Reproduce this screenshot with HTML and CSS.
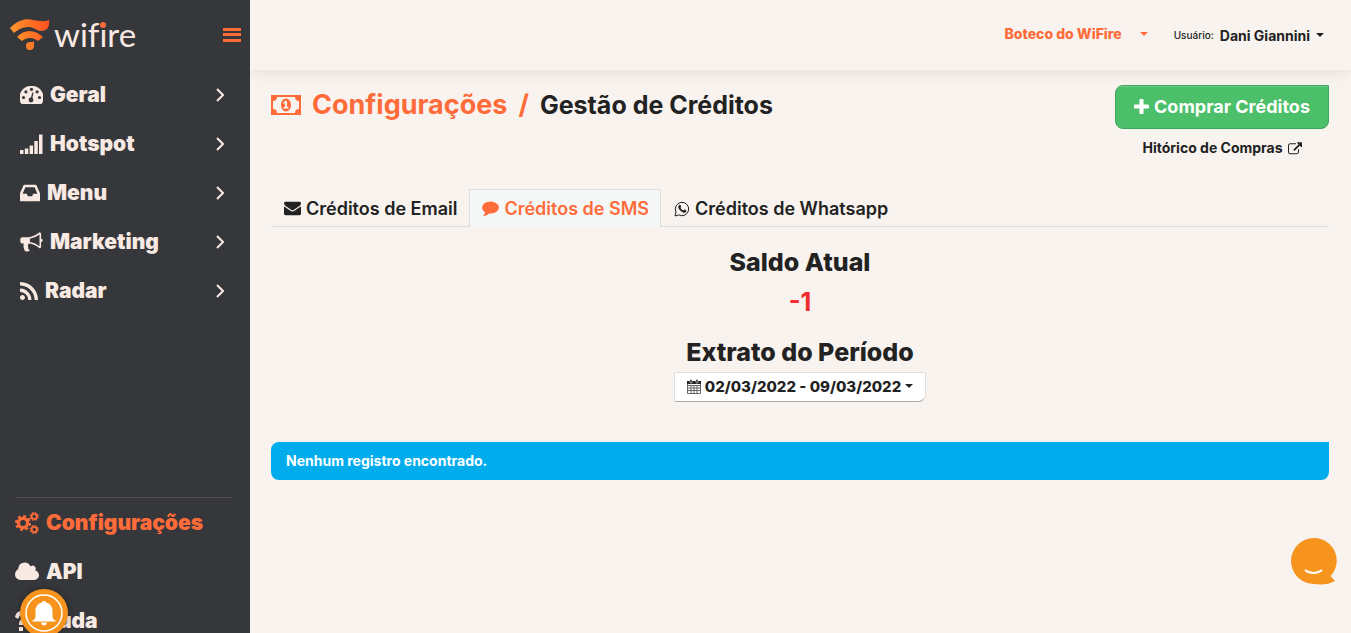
FILE: index.html
```html
<!DOCTYPE html>
<html lang="pt-BR">
<head>
  <meta charset="UTF-8" />
  <meta name="viewport" content="width=device-width, initial-scale=1.0" />
  <title>WiFire - Gestão de Créditos</title>
  <link rel="stylesheet" href="styles.css">
</head>
<body>
  <aside class="sidebar">
    <div class="brand">
      <a href="#" aria-label="wifire">
        <svg class="logo" viewBox="0 0 130 40">
          <defs>
            <linearGradient id="fire" gradientUnits="userSpaceOnUse" x1="0" y1="20" x2="40" y2="10">
              <stop offset="0" stop-color="#ff9b2d" />
              <stop offset="1" stop-color="#ff4f1f" />
            </linearGradient>
          </defs>
          <path fill="url(#fire)" d="M0 13C8 5 16 3 23 5c6 1 11 2 16 0 1 7-2 11-8 11-4 0-7-4-12-4-6 0-10 2-15 6z" />
          <path fill="url(#fire)" d="M7 22c7-8 18-8 26 0l-5 4c-5-4-11-4-16 0z" />
          <path fill="url(#fire)" d="M24 26v5a4 4 0 1 1-4-4c2 0 3 0 4-1z" />
          <text class="logo-text" x="44" y="32">wifire</text>
          <circle class="logo-dot" cx="93" cy="10" r="3" />
        </svg>
      </a>
      <button class="toggle" aria-label="Alternar menu">
        <svg viewBox="0 0 18 16"><path d="M0 1h18v3H0zM0 6h18v3H0zM0 12h18v3H0z" /></svg>
      </button>
    </div>

    <nav class="nav nav-main">
      <a href="#">
        <svg class="icon w23" viewBox="0 0 23 20"><path fill-rule="evenodd" d="M11.500 1A11.500 11.500 0 0 0 1.500 19h20A11.500 11.500 0 0 0 11.500 1z" /><g class="hole"><circle cx="3.500" cy="12.500" r="1.600" /><circle cx="5.900" cy="6.800" r="1.600" /><circle cx="11.500" cy="4.300" r="1.600" /><circle cx="17.100" cy="6.800" r="1.600" /><circle cx="19.500" cy="12.500" r="1.600" /><circle cx="11" cy="15" r="2.400" /><path d="M10.500 14l1.800-6.500 1.200.3L12 15z" /></g></svg>
        <span>Geral</span>
        <svg class="chevron" viewBox="0 0 8 14"><path d="M1 1l6 6-6 6" /></svg>
      </a>
      <a href="#">
        <svg class="icon w23" viewBox="0 0 23 20"><path d="M0 16h3.500v4H0zM4.800 14.500h3.500V20H4.800zM9.600 11.500h3.500V20H9.600zM14.300 7h3.500v13h-3.500zM19 .5h3.500V20H19z" /></svg>
        <span>Hotspot</span>
        <svg class="chevron" viewBox="0 0 8 14"><path d="M1 1l6 6-6 6" /></svg>
      </a>
      <a href="#">
        <svg class="icon w20" viewBox="128 128 1536 1536"><path d="M1151 960h316q-1-3-2.500-8t-2.500-8l-212-496h-708l-212 496q-1 2-2.500 8t-2.500 8h316l95 192h320zm513 30v482q0 26-19 45t-45 19h-1408q-26 0-45-19t-19-45v-482q0-62 25-123l238-552q10-25 36.500-42t52.500-17h832q26 0 52.500 17t36.500 42l238 552q25 61 25 123z" /></svg>
        <span>Menu</span>
        <svg class="chevron" viewBox="0 0 8 14"><path d="M1 1l6 6-6 6" /></svg>
      </a>
      <a href="#">
        <svg class="icon w23" viewBox="0 100 1792 1600"><path d="M1664 640q53 0 90.500 37.500t37.500 90.500-37.500 90.500-90.500 37.500v384q0 52-38 90t-90 38q-417-347-812-380-58 19-91 66t-31 100.500 40 92.500q-20 33-23 65.500t6 58 33.500 55 48 50 61.500 50.500q-29 58-111.500 83t-168.500 11.500-132-55.500q-7-23-29.500-87.500t-32-94.500-23-89-15-101 3.500-98.500 22-110.500h-122q-66 0-113-47t-47-113v-192q0-66 47-113t113-47h480q435 0 896-384 52 0 90 38t38 90v384zm-128 604v-954q-394 302-768 343v270q377 42 768 341z" /></svg>
        <span>Marketing</span>
        <svg class="chevron" viewBox="0 0 8 14"><path d="M1 1l6 6-6 6" /></svg>
      </a>
      <a href="#">
        <svg class="icon w18" viewBox="192 128 1408 1408"><path d="M576 1344q0 80-56 136t-136 56-136-56-56-136 56-136 136-56 136 56 56 136zm512 123q2 28-17 48-18 21-47 21h-135q-25 0-43-16.500t-20-41.500q-22-229-184.500-391.500t-391.500-184.500q-25-2-41.500-20t-16.500-43v-135q0-29 21-47 17-17 43-17h5q160 13 306 80.500t259 181.500q114 113 181.500 259t80.500 306zm512 2q2 27-18 47-18 20-46 20h-143q-26 0-44.500-17.500t-19.500-42.500q-12-215-101-408.500t-231.500-336-336-231.500-408.500-102q-25-1-42.500-19.500t-17.500-43.500v-143q0-28 20-46 18-18 44-18h3q262 13 501.500 120t425.500 294q187 186 294 425.500t120 501.500z" /></svg>
        <span>Radar</span>
        <svg class="chevron" viewBox="0 0 8 14"><path d="M1 1l6 6-6 6" /></svg>
      </a>
    </nav>

    <nav class="nav nav-bottom">
      <a href="#" class="active">
        <svg class="icon gears" viewBox="0 0 24 22">
          <g class="gear"><circle cx="8" cy="11" r="4.600" stroke-width="3.200" /><circle cx="8" cy="11" r="6.900" stroke-width="2.200" stroke-dasharray="2.900 2.519" /><circle cx="19.200" cy="4.500" r="2.600" stroke-width="1.800" /><circle cx="19.200" cy="4.500" r="3.900" stroke-width="1.300" stroke-dasharray="1.700 1.363" /><circle cx="19.200" cy="17.500" r="2.600" stroke-width="1.800" /><circle cx="19.200" cy="17.500" r="3.900" stroke-width="1.300" stroke-dasharray="1.700 1.363" /></g>
        </svg>
        <span>Configurações</span>
      </a>
      <a href="#">
        <svg class="icon w24" viewBox="64 256 1920 1280"><path d="M1984 1152q0 159-112.500 271.500t-271.500 112.500h-1088q-185 0-316.500-131.500t-131.500-316.500q0-132 71-241.500t187-163.500q-2-28-2-43 0-212 150-362t362-150q158 0 286.500 88t187.500 230q70-62 166-62 106 0 181 75t75 181q0 75-41 138 129 30 213 134.500t84 239.500z" /></svg>
        <span>API</span>
      </a>
      <a href="#">
        <svg class="icon w13" viewBox="0 0 13 20"><path d="M0 6C1 2 3 0 7 0c6 0 8 6 4 10-2 1-3 2-3 4H4c0-4 1-5 3-6 2-2 1-4-1-4-1 0-2 2-3 4zM4 16h4v4H4z" /></svg>
        <span>Ajuda</span>
      </a>
    </nav>
  </aside>

  <div class="page">
    <header class="topbar">
      <button class="company">Boteco do WiFire <i class="caret"></i></button>
      <button class="user"><small>Usuário:</small> Dani Giannini <i class="caret"></i></button>
    </header>

    <main>
      <div class="heading">
        <h1>
          <svg class="money" viewBox="0 0 30 20"><path fill-rule="evenodd" d="M0 0h30v20H0zM6 2a4 4 0 0 1-4 4v8a4 4 0 0 1 4 4h18a4 4 0 0 1 4-4V6a4 4 0 0 1-4-4z" /><path fill-rule="evenodd" d="M15 3.500c3 0 5 3 5 6.500s-2 6.500-5 6.500-5-3-5-6.500 2-6.500 5-6.500zM14 6l-2 2 1 1 1-1v4h-1.500v1.500h5V12H16V6z" /></svg>
          <span class="section">Configurações</span>
          <span class="section">/</span>
          <span class="current">Gestão de Créditos</span>
        </h1>
        <div class="buy">
          <button class="btn-buy">
            <svg viewBox="192 128 1408 1408"><path d="M1600 736v192q0 40-28 68t-68 28h-416v416q0 40-28 68t-68 28h-192q-40 0-68-28t-28-68v-416h-416q-40 0-68-28t-28-68v-192q0-40 28-68t68-28h416v-416q0-40 28-68t68-28h192q40 0 68 28t28 68v416h416q40 0 68 28t28 68z" /></svg>
            Comprar Créditos
          </button>
          <a href="#" class="history">Hitórico de Compras
            <svg viewBox="0 0 1792 1600"><path d="M1408 928v320q0 119-84.500 203.500t-203.500 84.500h-832q-119 0-203.500-84.500t-84.500-203.500v-832q0-119 84.500-203.500t203.500-84.500h704q14 0 23 9t9 23v64q0 14-9 23t-23 9h-704q-66 0-113 47t-47 113v832q0 66 47 113t113 47h832q66 0 113-47t47-113v-320q0-14 9-23t23-9h64q14 0 23 9t9 23zm384-864v512q0 26-19 45t-45 19-45-19l-176-176-652 652q-10 10-23 10t-23-10l-114-114q-10-10-10-23t10-23l652-652-176-176q-19-19-19-45t19-45 45-19h512q26 0 45 19t19 45z" /></svg>
          </a>
        </div>
      </div>

      <nav class="tabs">
        <a href="#">
          <svg viewBox="0 192 1792 1536"><path d="M1792 710v794q0 66-47 113t-113 47h-1472q-66 0-113-47t-47-113v-794q44 49 101 87 362 246 497 345 57 42 92.500 65.500t94.500 48 110 24.500h2q51 0 110-24.500t94.500-48 92.500-65.500q170-123 498-345 57-39 100-87zm0-294q0 79-49 151t-122 123q-376 261-468 325-10 7-42.500 31t-54 38.500-52 32.500-57.500 27-50 9h-2q-23 0-50-9t-57.500-27-52-32.500-54-38.500-42.500-31q-91-64-262-182.500t-205-142.500q-62-42-117-115.500t-55-136.500q0-78 41.500-130t118.500-52h1472q65 0 112.500 47t47.500 113z" /></svg>
          Créditos de Email
        </a>
        <a href="#" class="active">
          <svg viewBox="0 192 1792 1600"><path d="M1792 896q0 174-120 321.500t-326 233-450 85.500q-70 0-145-8-198 175-460 242-49 14-114 22-17 2-30.500-9t-17.500-29v-1q-3-4-.5-12t2-10 4.500-9.500l6-9 7-8.500 8-9q7-8 31-34.500t34.500-38 31-39.500 32.500-51 27-59 26-76q-157-89-247.500-220t-90.500-281q0-130 71-248.500t191-204.500 286-136.500 348-50.500q244 0 450 85.500t326 233 120 321.500z" /></svg>
          Créditos de SMS
        </a>
        <a href="#">
          <svg class="whats" viewBox="0 0 16 16"><path class="line" d="M1 15l1-4a6.700 6.700 0 1 1 2.800 2.900z" /><path d="M5.300 4c.8-.5 1.200-.2 1.500.7.500 1 .3 1.300-.3 2 .8 1.400 1.600 2.100 3 2.700.7-1 .9-1.100 1.400-.8l1.400.8c.4 1.500-1.300 2.500-2.500 2.300C7 11 4.500 8 4.200 6.300c0-1 .4-1.800 1.100-2.300z" /></svg>
          Créditos de Whatsapp
        </a>
      </nav>

      <section class="balance">
        <h2>Saldo Atual</h2>
        <p class="negative">-1</p>
        <h2>Extrato do Período</h2>
        <button class="period">
          <svg viewBox="0 0 14 15"><path class="grid" d="M.5 3.500h13v11H.5zM.5 6.500h13M.5 9h13M.5 11.500h13M4 6v8M7 6v8M10 6v8" /><path d="M0 2h14v3H0z" /><path class="pin" d="M3 .5h2V4H3zM9 .5h2V4H9z" /></svg>
          02/03/2022 - 09/03/2022
          <i class="caret"></i>
        </button>
      </section>

      <div class="alert">Nenhum registro encontrado.</div>
    </main>
  </div>

  <button class="bell" aria-label="Notificações">
    <svg viewBox="0 0 48 48"><circle class="ring" cx="24" cy="24" r="18" /><path d="M24 12c1.500 0 2 .6 2 1.600 4 1 6.500 4 6.500 8v6c0 2 1 3 3 4v1h-23v-1c2-1 3-2 3-4v-6c0-4 2.500-7 6.500-8 0-1 .5-1.600 2-1.600zM21 33.500h6c-.5 2-1.500 3-3 3s-2.500-1-3-3z" /></svg>
  </button>
  <button class="chat" aria-label="Chat">
    <svg viewBox="0 0 46 48"><path d="M23 1a22.500 22.500 0 0 1 16.500 38l4.500 5c-6 3.500-14 4-21 3A23 23 0 0 1 23 1z" /><path class="smile" d="M14 33c5 4 12 4 17 0" /></svg>
  </button>
</body>
</html>
```

FILE: styles.css
```css
* {
  box-sizing: border-box;
}
body {
  margin: 0;
  display: flex;
  min-height: 100vh;
  font-family: Inter, "Liberation Sans", sans-serif;
  font-size: 14px;
  font-weight: 700;
  color: #222;
  background: #f8f3ef;
}
a {
  color: inherit;
  text-decoration: none;
}
button {
  font: inherit;
  color: inherit;
  background: none;
  border: none;
  padding: 0;
  cursor: pointer;
}
svg {
  fill: currentColor;
  flex: none;
}
.caret {
  display: inline-block;
  border-top: 4px solid;
  border-left: 4px solid transparent;
  border-right: 4px solid transparent;
}

/* sidebar */
.sidebar {
  display: flex;
  flex-direction: column;
  flex: none;
  width: 250px;
  height: 100vh;
  position: sticky;
  top: 0;
  overflow: hidden;
  background: #36373b;
  color: #f8e9e2;
}
.brand {
  display: flex;
  align-items: center;
  justify-content: space-between;
  height: 70px;
  padding: 0 9px 0 10px;
}
.logo {
  display: block;
  width: 130px;
  height: 40px;
}
.logo-text {
  font-family: Lato, sans-serif;
  font-size: 33px;
  font-weight: 400;
  font-variant-ligatures: none;
}
.logo-dot {
  fill: #ff6c3a;
}
.toggle {
  color: #ff6c3a;
}
.toggle svg {
  display: block;
  width: 18px;
  height: 16px;
}
.nav a {
  display: flex;
  align-items: center;
  gap: 7px;
  height: 49px;
  font-size: 21px;
  font-weight: 900;
}
.nav-main {
  flex: 1;
  min-height: 0;
  overflow: hidden;
  padding: 0 26px 0 20px;
}
.nav-bottom {
  flex: none;
  height: 136px;
  overflow: hidden;
  margin: 0 18px 0 15px;
  border-top: 1px solid #505052;
}
.nav .active {
  color: #ff6c3a;
}
.icon {
  height: 20px;
}
.w13 { width: 13px; }
.w18 { width: 18px; }
.w20 { width: 20px; }
.w23 { width: 23px; }
.w24 { width: 24px; }
.gears {
  width: 24px;
  height: 22px;
}
.hole {
  fill: #36373b;
}
.gear {
  fill: none;
  stroke: currentColor;
}
.chevron {
  width: 8px;
  height: 14px;
  margin-left: auto;
  fill: none;
  stroke: currentColor;
  stroke-width: 2;
}

/* content */
.page {
  flex: 1;
  min-width: 0;
}
.topbar {
  display: flex;
  align-items: center;
  justify-content: flex-end;
  gap: 26px;
  height: 70px;
  padding-right: 27px;
  box-shadow: 0 4px 12px rgba(0, 0, 0, 0.07);
}
.topbar button {
  display: flex;
  align-items: center;
  gap: 6px;
}
.topbar small {
  font-size: 10px;
  font-weight: 500;
}
.topbar .company {
  gap: 18px;
  padding-bottom: 3px;
  color: #ff6c3a;
  font-weight: 800;
}
main {
  padding: 15px 22px 15px 21px;
}
.heading {
  display: flex;
  justify-content: space-between;
  align-items: flex-start;
}
h1 {
  display: flex;
  align-items: center;
  gap: 11px;
  margin: 0;
  line-height: 40px;
  font-size: 27px;
  font-weight: 700;
}
.money {
  width: 30px;
  height: 20px;
}
.section,
.money {
  color: #ff6c3a;
}
.current {
  font-size: 25px;
}
.buy {
  display: flex;
  flex-direction: column;
  align-items: center;
  gap: 8px;
}
.btn-buy {
  display: flex;
  align-items: center;
  gap: 5px;
  height: 44px;
  padding: 0 18px 2px;
  border: 1px solid #3da65a;
  border-radius: 8px 0 8px 8px;
  background: #4bbf69;
  box-shadow: inset 0 1px 0 #72cd8a;
  color: #fff;
  font-size: 18px;
}
.btn-buy svg {
  width: 15px;
  height: 15px;
}
.history {
  display: flex;
  align-items: center;
  gap: 5px;
  line-height: 22px;
}
.history svg {
  width: 14px;
  height: 13px;
}
.tabs {
  display: flex;
  margin-top: 30px;
  border-bottom: 1px solid #ddd;
}
.tabs a {
  display: flex;
  align-items: center;
  gap: 5px;
  height: 38px;
  margin-bottom: -1px;
  padding: 0 11px 0 12px;
  border: 1px solid transparent;
  border-bottom: none;
  font-size: 18px;
  font-weight: 600;
}
.tabs a.active {
  color: #ff6c3a;
  background: #f5f7f6;
  border-color: #ddd;
}
.tabs svg {
  width: 17px;
  height: 15px;
}
.tabs .whats {
  width: 16px;
  height: 16px;
}
.line {
  fill: none;
  stroke: currentColor;
}
.balance {
  padding-top: 15px;
  text-align: center;
}
h2,
.negative {
  margin: 0;
  font-size: 25px;
  line-height: 40px;
}
h2 {
  font-weight: 800;
}
.negative {
  color: #f02c2c;
  margin-bottom: 10px;
}
.period {
  display: inline-flex;
  align-items: center;
  gap: 4px;
  height: 30px;
  padding: 0 12px 2px;
  border: 1px solid #ddd;
  border-bottom-color: #aaa;
  border-radius: 0 0 8px 0;
  background: #fff;
  font-size: 15px;
  font-weight: 800;
}
.period svg {
  width: 14px;
  height: 15px;
}
.grid {
  fill: none;
  stroke: #666;
}
.pin {
  fill: #222;
  stroke: #fff;
  stroke-width: 0.5;
}
.alert {
  margin-top: 40px;
  padding: 0 15px;
  border-radius: 8px 0 8px 8px;
  background: #00acec;
  color: #fff;
  line-height: 38px;
}

/* floating buttons */
.bell,
.chat {
  position: fixed;
}
.bell {
  left: 20px;
  bottom: -4px;
  width: 48px;
  height: 48px;
  border-radius: 50%;
  background: #f7941d;
  color: #fff;
  box-shadow: 0 0 6px rgba(0, 0, 0, 0.3);
}
.bell svg,
.chat svg {
  display: block;
  width: 100%;
}
.ring {
  fill: none;
  stroke: #fff;
  stroke-width: 1.5;
}
.chat {
  right: 14px;
  bottom: 48px;
  width: 46px;
  height: 48px;
  color: #f7941d;
}
.smile {
  fill: none;
  stroke: #fff;
  stroke-width: 2;
}
```
